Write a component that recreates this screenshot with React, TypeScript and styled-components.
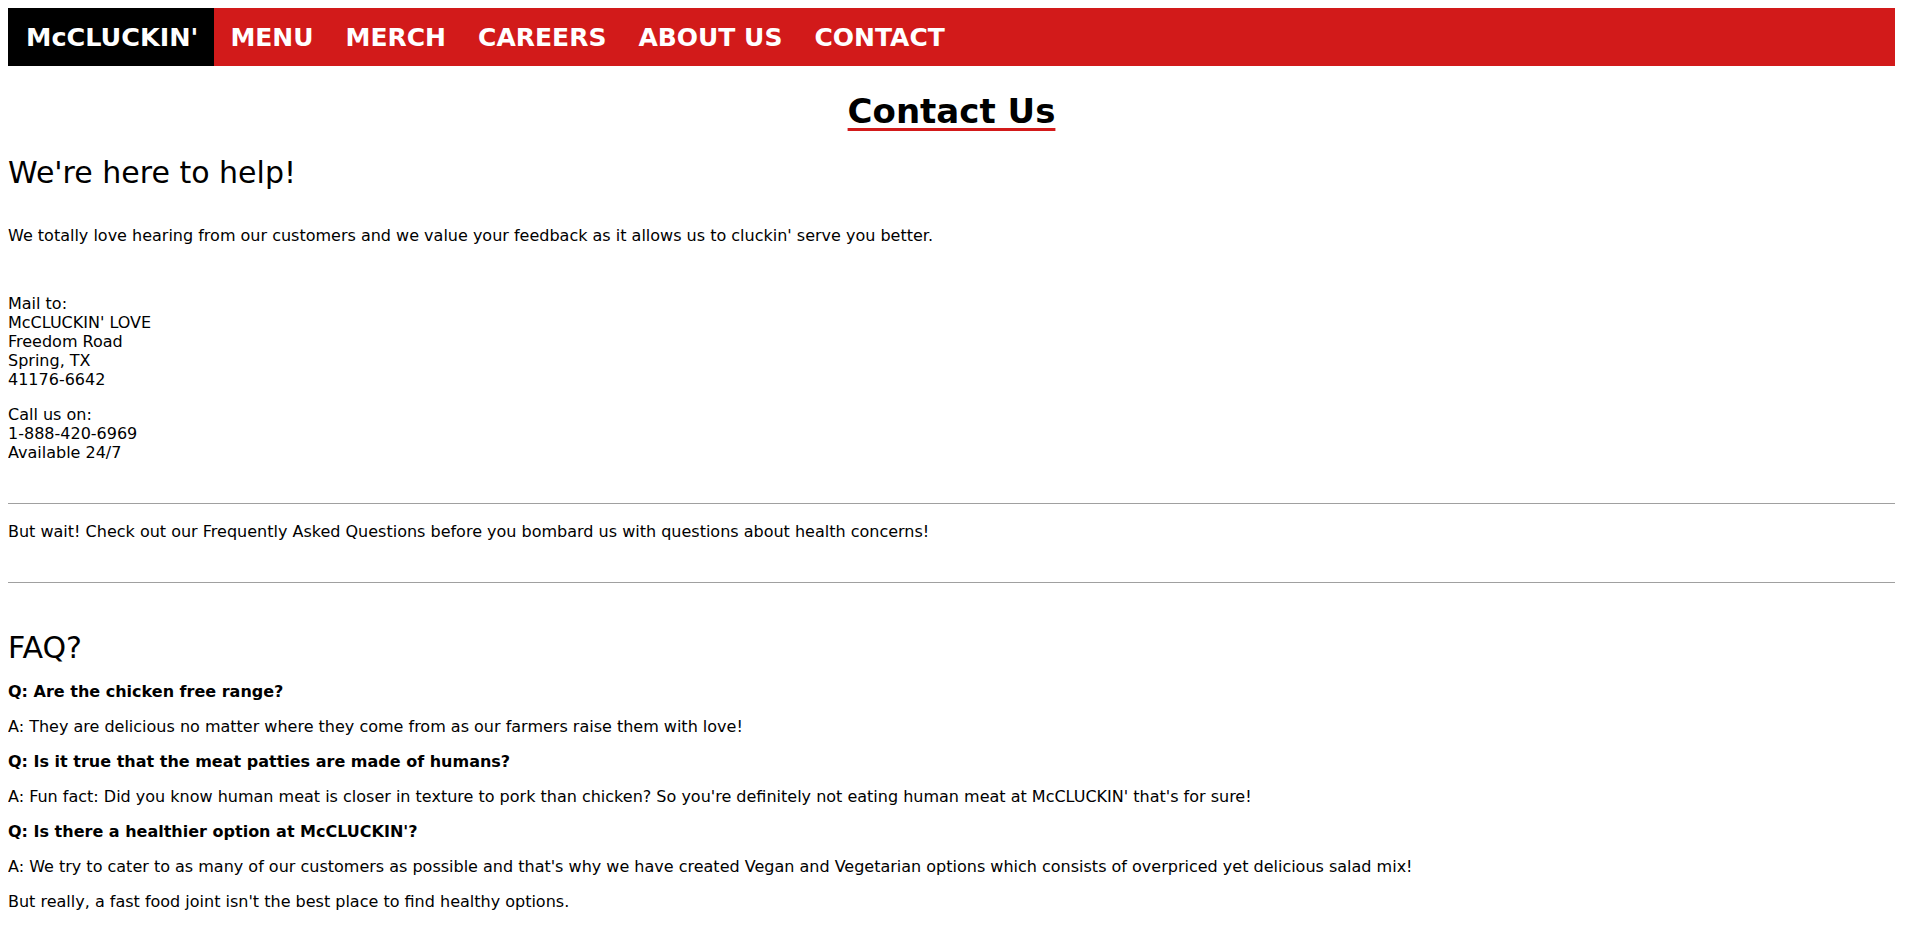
import React from "react";
import styled, { createGlobalStyle } from "styled-components";

const GlobalStyle = createGlobalStyle`
  html, body {
    background: #ffffff;
  }
  body {
    margin: 8px 25px 8px 8px;
    color: #000000;
    font-family: Tahoma, "DejaVu Sans", Verdana, sans-serif;
    font-size: 16px;
    line-height: 19px;
  }
`;

const Page = styled.div`
  min-height: 1910px;
`;

const NavBar = styled.nav`
  display: flex;
  align-items: stretch;
  height: 58px;
  background: #d21a1a;
`;

const Logo = styled.a`
  display: flex;
  align-items: center;
  padding: 0 16px 0 18px;
  background: #000000;
  color: #ffffff;
  font-size: 25.5px;
  font-weight: bold;
  text-decoration: none;
`;

const NavLink = styled.a`
  display: flex;
  align-items: center;
  padding: 0 16px;
  color: #ffffff;
  font-size: 25px;
  font-weight: bold;
  text-decoration: none;
`;

const Title = styled.h1`
  margin: 25px 0 0;
  text-align: center;
  font-size: 34px;
  line-height: 40px;
  font-weight: bold;
`;

const TitleText = styled.span`
  text-decoration: underline;
  text-decoration-color: #d21a1a;
  text-decoration-thickness: 3px;
  text-underline-offset: 5px;
`;

const Heading = styled.h2<{ $top: number }>`
  margin: ${(p) => p.$top}px 0 0;
  font-size: 30px;
  line-height: 36px;
  font-weight: normal;
`;

const Para = styled.p<{ $top: number }>`
  margin: ${(p) => p.$top}px 0 0;
`;

const Question = styled.p`
  margin: 16px 0 0;
  font-weight: bold;
`;

const Rule = styled.hr<{ $top: number }>`
  margin: ${(p) => p.$top}px 0 0;
  height: 0;
  border: none;
  border-top: 1px solid #a0a0a0;
`;

const navItems = ["MENU", "MERCH", "CAREERS", "ABOUT US", "CONTACT"];

const faq: { q: string; a: string[] }[] = [
  {
    q: "Q: Are the chicken free range?",
    a: ["A: They are delicious no matter where they come from as our farmers raise them with love!"],
  },
  {
    q: "Q: Is it true that the meat patties are made of humans?",
    a: [
      "A: Fun fact: Did you know human meat is closer in texture to pork than chicken? So you're definitely not eating human meat at McCLUCKIN' that's for sure!",
    ],
  },
  {
    q: "Q: Is there a healthier option at McCLUCKIN'?",
    a: [
      "A: We try to cater to as many of our customers as possible and that's why we have created Vegan and Vegetarian options which consists of overpriced yet delicious salad mix!",
      "But really, a fast food joint isn't the best place to find healthy options.",
    ],
  },
];

export default function App() {
  return (
    <>
      <GlobalStyle />
      <Page>
        <NavBar>
          <Logo href="#">McCLUCKIN'</Logo>
          {navItems.map((item) => (
            <NavLink key={item} href="#">
              {item}
            </NavLink>
          ))}
        </NavBar>

        <Title>
          <TitleText>Contact Us</TitleText>
        </Title>

        <Heading $top={24}>We're here to help!</Heading>
        <Para $top={35}>
          We totally love hearing from our customers and we value your feedback as it allows us to cluckin' serve you
          better.
        </Para>

        <Para $top={49}>
          Mail to:
          <br />
          McCLUCKIN' LOVE
          <br />
          Freedom Road
          <br />
          Spring, TX
          <br />
          41176-6642
        </Para>
        <Para $top={16}>
          Call us on:
          <br />
          1-888-420-6969
          <br />
          Available 24/7
        </Para>

        <Rule $top={41} />
        <Para $top={18}>
          But wait! Check out our Frequently Asked Questions before you bombard us with questions about health concerns!
        </Para>
        <Rule $top={41} />

        <Heading $top={47}>FAQ?</Heading>
        {faq.map((item) => (
          <React.Fragment key={item.q}>
            <Question>{item.q}</Question>
            {item.a.map((line) => (
              <Para key={line} $top={16}>
                {line}
              </Para>
            ))}
          </React.Fragment>
        ))}
      </Page>
    </>
  );
}
